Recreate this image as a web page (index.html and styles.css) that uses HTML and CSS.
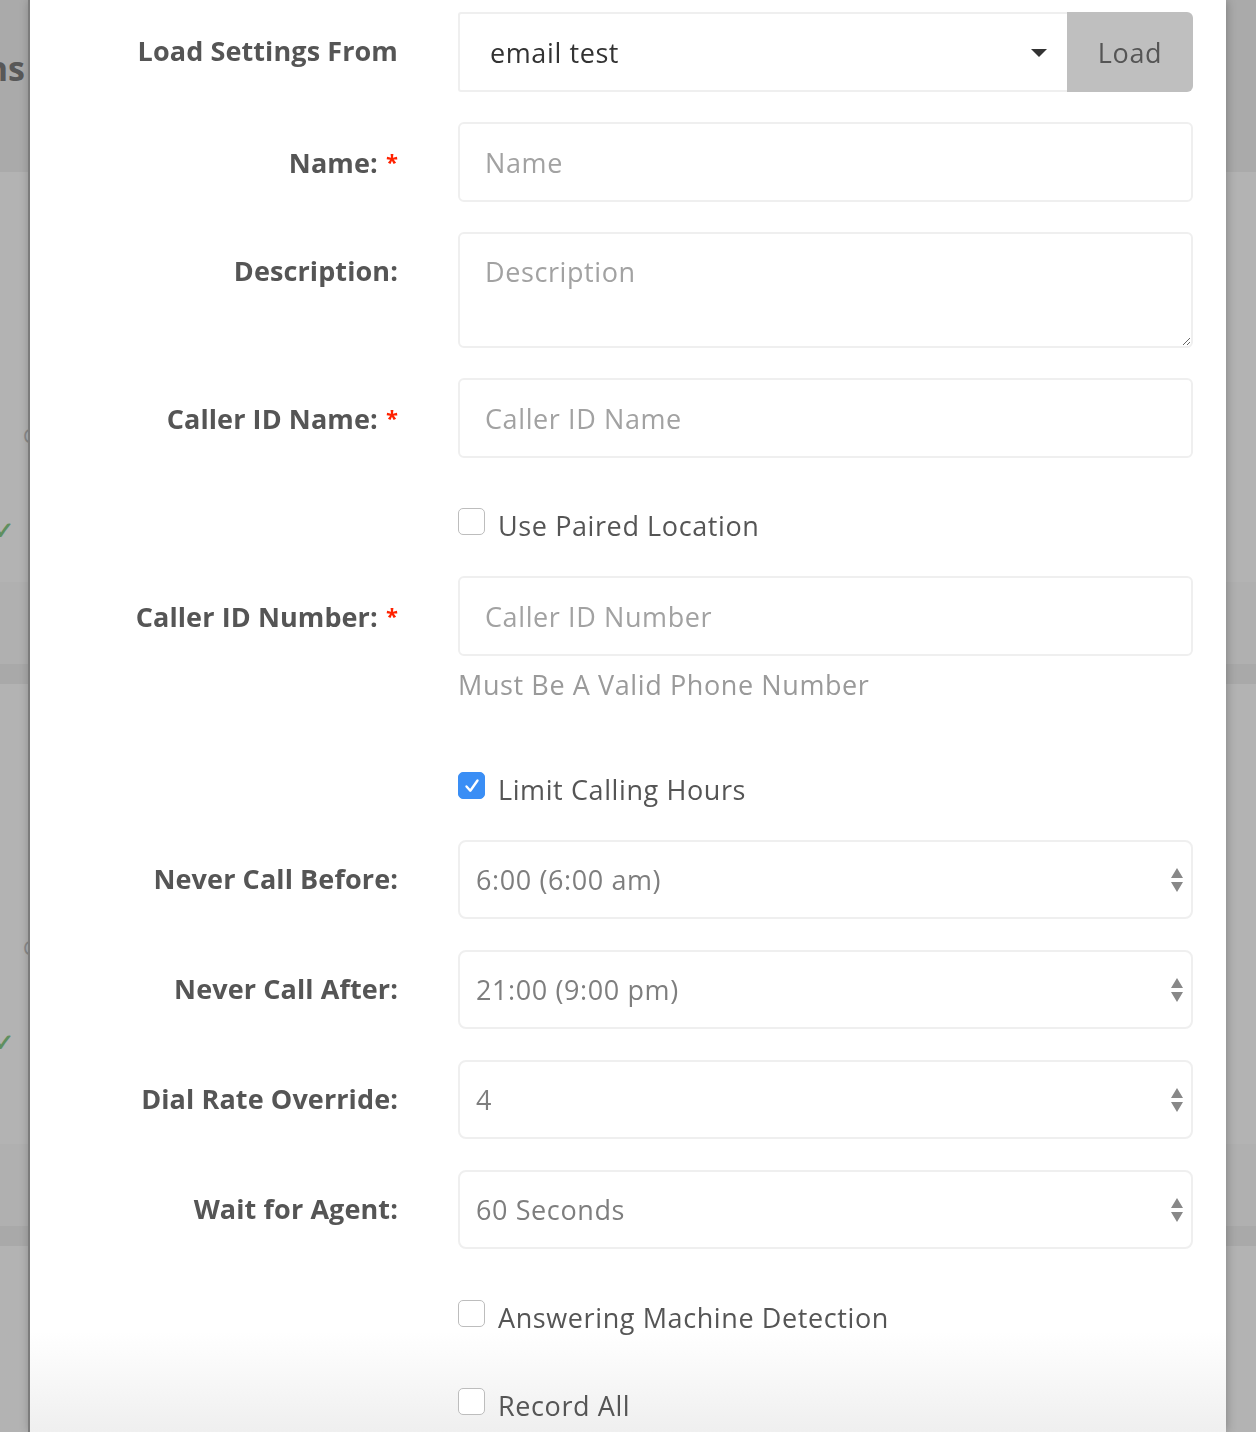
FILE: index.html
```html
<!DOCTYPE html>
<html lang="en">
<head>
    <meta charset="UTF-8">
    <meta name="viewport" content="width=device-width, initial-scale=1.0">
    <title>Edit Campaign</title>
    <link rel="stylesheet" href="styles.css">
</head>
<body>
    <!-- page behind the modal -->
    <div class="page">
        <div class="page-header">
            <div class="page-title"><span>Campaigns</span></div>
        </div>
        <div class="bg-card">
            <div class="bg-cell"><span class="bg-glyph">C</span></div>
            <div class="bg-status">&#10003;</div>
        </div>
        <div class="bg-foot"></div>
        <div class="bg-gap"></div>
        <div class="bg-card second">
            <div class="bg-cell"><span class="bg-glyph">C</span></div>
            <div class="bg-status">&#10003;</div>
        </div>
        <div class="bg-foot"></div>
        <div class="bg-gap"></div>
    </div>

    <div class="modal">
        <form class="form">
            <div class="row">
                <label class="label">Load Settings From</label>
                <div class="load-group">
                    <div class="select first">
                        <span>email test</span>
                        <svg class="caret" width="16" height="8" viewBox="0 0 16 8"><path d="M0 0h16L8 8z" fill="#333"/></svg>
                    </div>
                    <button type="button" class="load-btn">Load</button>
                </div>
            </div>

            <div class="row">
                <label class="label">Name: <span class="req">*</span></label>
                <input type="text" class="input" placeholder="Name">
            </div>

            <div class="row">
                <label class="label">Description:</label>
                <textarea class="textarea" placeholder="Description"></textarea>
            </div>

            <div class="row">
                <label class="label">Caller ID Name: <span class="req">*</span></label>
                <input type="text" class="input" placeholder="Caller ID Name">
            </div>

            <div class="row check-row">
                <span></span>
                <div class="check"><span class="box"></span>Use Paired Location</div>
            </div>

            <div class="row">
                <label class="label">Caller ID Number: <span class="req">*</span></label>
                <div>
                    <input type="text" class="input" placeholder="Caller ID Number">
                    <div class="help">Must Be A Valid Phone Number</div>
                </div>
            </div>

            <div class="row check-row">
                <span></span>
                <div class="check">
                    <span class="box checked">
                        <svg width="18" height="18" viewBox="0 0 18 18"><path d="M3.5 9.5l3.8 4.2L14.5 3.5" fill="none" stroke="#fff" stroke-width="2.4" stroke-linecap="round" stroke-linejoin="round"/></svg>
                    </span>Limit Calling Hours
                </div>
            </div>

            <div class="row">
                <label class="label">Never Call Before:</label>
                <div class="select">
                    <span>6:00 (6:00 am)</span>
                    <svg class="updown" width="12" height="24" viewBox="0 0 12 24"><path d="M6 0l6 10H0z M0 14h12L6 24z" fill="#888"/></svg>
                </div>
            </div>

            <div class="row">
                <label class="label">Never Call After:</label>
                <div class="select">
                    <span>21:00 (9:00 pm)</span>
                    <svg class="updown" width="12" height="24" viewBox="0 0 12 24"><path d="M6 0l6 10H0z M0 14h12L6 24z" fill="#888"/></svg>
                </div>
            </div>

            <div class="row">
                <label class="label">Dial Rate Override:</label>
                <div class="select">
                    <span>4</span>
                    <svg class="updown" width="12" height="24" viewBox="0 0 12 24"><path d="M6 0l6 10H0z M0 14h12L6 24z" fill="#888"/></svg>
                </div>
            </div>

            <div class="row">
                <label class="label">Wait for Agent:</label>
                <div class="select">
                    <span>60 Seconds</span>
                    <svg class="updown" width="12" height="24" viewBox="0 0 12 24"><path d="M6 0l6 10H0z M0 14h12L6 24z" fill="#888"/></svg>
                </div>
            </div>

            <div class="row check-row">
                <span></span>
                <div class="check"><span class="box"></span>Answering Machine Detection</div>
            </div>

            <div class="row check-row">
                <span></span>
                <div class="check"><span class="box"></span>Record All</div>
            </div>
        </form>
    </div>
</body>
</html>
```

FILE: styles.css
```css
/* page + modal */
body {
    margin: 0;
    padding: 0;
    background-color: #b3b3b3;
    font-family: "Open Sans", "Noto Sans", sans-serif;
    overflow: hidden;
}

.page-header {
    height: 172px;
    background-color: #aaaaaa;
    padding-top: 46px;
    box-sizing: border-box;
}

.page-title {
    width: 25px;
    display: flex;
    justify-content: flex-end;
    overflow: hidden;
    white-space: nowrap;
    font-size: 34px;
    font-weight: bold;
    color: #585858;
    line-height: 44px;
}

.bg-card {
    height: 410px;
    padding-top: 254px;
    box-sizing: border-box;
}

.bg-card.second {
    height: 460px;
    padding-top: 254px;
}

.bg-cell {
    height: 20px;
    padding-left: 23px;
    font-size: 20px;
    line-height: 20px;
    color: #8a8a8a;
}

.bg-status {
    margin-top: 72px;
    margin-left: -6px;
    font-size: 24px;
    font-weight: bold;
    line-height: 24px;
    color: #5f8f5f;
}

.bg-foot {
    height: 82px;
    background-color: #b0b0b0;
}

.bg-gap {
    height: 20px;
    background-color: #a9a9a9;
}

.modal {
    position: fixed;
    top: 0;
    left: 30px;
    width: 1196px;
    height: 100%;
    background: linear-gradient(#fff calc(100% - 100px), #efefef);
    box-shadow: -2px 0 0 0 #7c7c7c, 0 0 10px rgba(0, 0, 0, 0.3);
    overflow: hidden;
}

.form {
    padding: 12px 0 0 30px;
}

.row {
    display: grid;
    grid-template-columns: 338px 735px;
    column-gap: 60px;
    margin-bottom: 30px;
}

.label {
    height: 80px;
    text-align: right;
    font-size: 27px;
    font-weight: bold;
    letter-spacing: 0.1px;
    color: #555;
    line-height: 78px;
    white-space: nowrap;
}

.req {
    color: #ff2200;
    font-size: 22px;
    margin-left: 1px;
    vertical-align: 3px;
}

.input, .textarea {
    display: block;
    width: 100%;
    height: 80px;
    box-sizing: border-box;
    border: 2px solid #efefef;
    border-radius: 6px;
    padding: 0 25px;
    font-family: "Open Sans", "Noto Sans", sans-serif;
    font-size: 27px;
    letter-spacing: 0.6px;
    color: #333;
    outline: none;
    background: #fff;
}

.textarea {
    height: 116px;
    padding-top: 19px;
    line-height: 38px;
    resize: vertical;
}

.input::placeholder, .textarea::placeholder {
    color: #a2a2a2;
}

.help {
    margin-top: 11px;
    margin-bottom: 19px;
    font-size: 27px;
    letter-spacing: 0.6px;
    line-height: 36px;
    color: #9a9a9a;
}

.load-group {
    display: flex;
    height: 80px;
}

.select {
    height: 79px;
    box-sizing: border-box;
    border: 2px solid #efefef;
    border-radius: 8px;
    display: flex;
    align-items: center;
    justify-content: space-between;
    padding: 0 8px 0 16px;
    font-size: 27px;
    letter-spacing: 0.6px;
    color: #7e7e7e;
}

.select.first {
    flex: 1;
    height: 80px;
    border-radius: 3px 0 0 3px;
    border-right: none;
    padding: 0 20px 0 30px;
    color: #333;
}

.caret {
    margin-top: 2px;
}

.load-btn {
    width: 126px;
    border: none;
    border-radius: 0 6px 6px 0;
    background-color: #bfbfbf;
    font-family: "Open Sans", "Noto Sans", sans-serif;
    font-size: 27px;
    letter-spacing: 0.6px;
    color: #555;
    padding: 0;
}

.check-row {
    padding-top: 16px;
}

.check {
    display: flex;
    align-items: center;
    height: 42px;
    font-size: 27px;
    letter-spacing: 0.6px;
    color: #555;
}

.box {
    width: 27px;
    height: 27px;
    box-sizing: border-box;
    border: 1.5px solid #bdbdbd;
    border-radius: 5px;
    margin-right: 13px;
    margin-bottom: 7px;
    display: flex;
    align-items: center;
    justify-content: center;
    background: #fff;
}

.box.checked {
    background-color: #3a8ef5;
    border-color: #3a8ef5;
}
```
